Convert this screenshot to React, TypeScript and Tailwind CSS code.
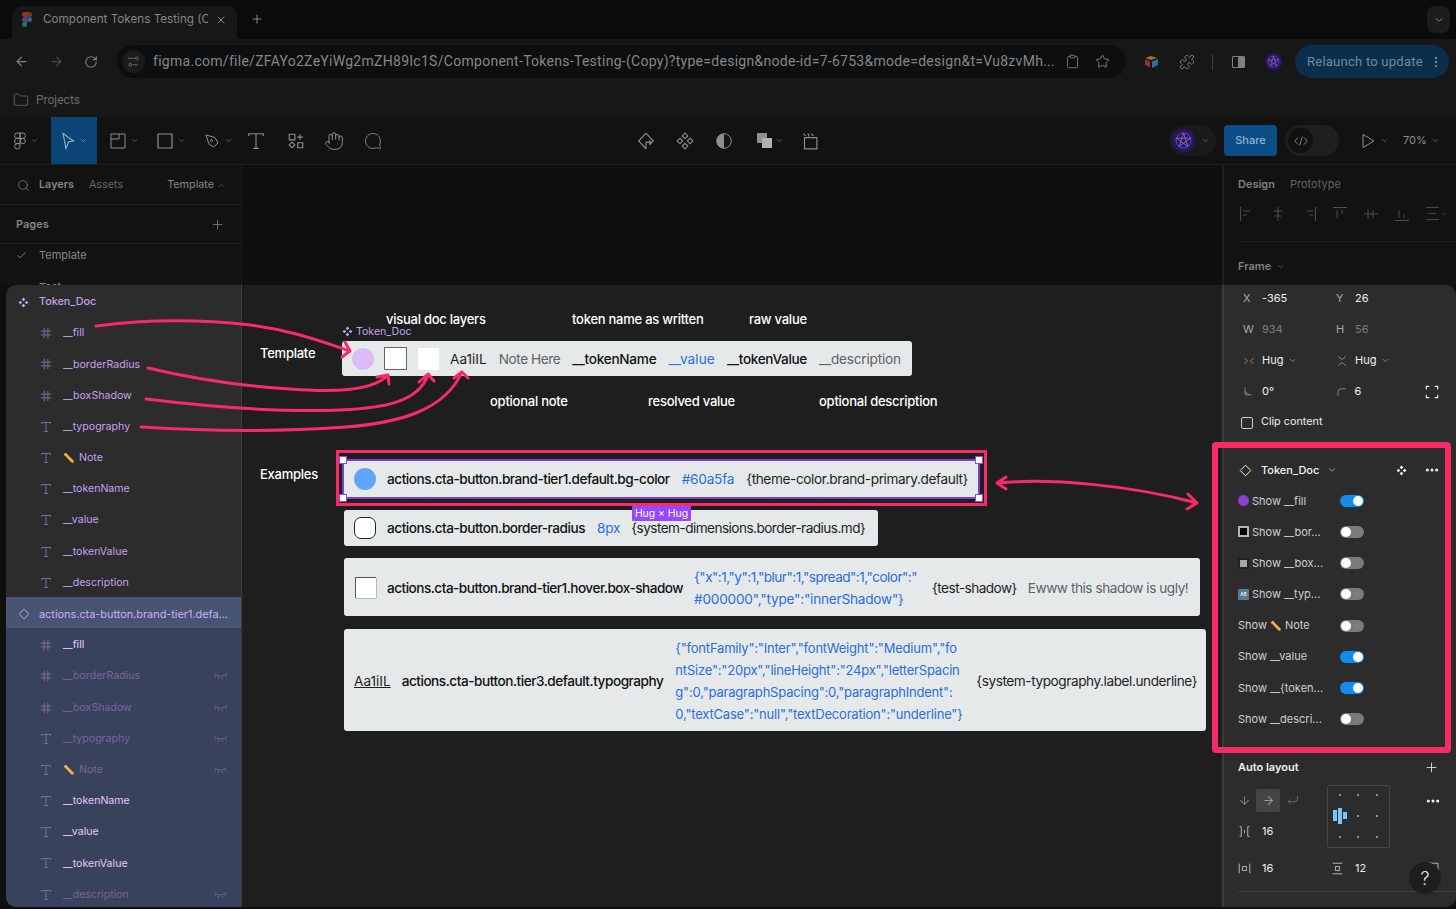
import {
  ArrowLeft,
  ArrowRight,
  Check,
  ChevronDown,
  ChevronUp,
  Clipboard,
  Folder,
  Hand,
  MessageCircle,
  MoreHorizontal,
  MoreVertical,
  Plus,
  Puzzle,
  RotateCw,
  Search,
  Star,
  X,
} from 'lucide-react';

function Svg({ size = 16, children, className }: { size?: number; children: React.ReactNode; className?: string }) {
  return (
    <svg width={size} height={size} viewBox="0 0 16 16" fill="none" stroke="currentColor" strokeWidth={1} className={className}>
      {children}
    </svg>
  );
}

function ComponentIcon({ size = 12, className }: { size?: number; className?: string }) {
  return (
    <svg width={size} height={size} viewBox="0 0 12 12" fill="currentColor" className={className}>
      <path d="M6 .6 8 2.6 6 4.6 4 2.6zM2.6 4 4.6 6 2.6 8 .6 6zM9.4 4 11.4 6 9.4 8 7.4 6zM6 7.4 8 9.4 6 11.4 4 9.4z" />
    </svg>
  );
}

function HashIcon() {
  return (
    <Svg size={12}>
      <path d="M5.5 1v14M10.5 1v14M1 5.5h14M1 10.5h14" strokeWidth={1.3} />
    </Svg>
  );
}

function SerifT() {
  return (
    <Svg size={12}>
      <path d="M2 4V2h12v2M8 2v12M5.5 14h5" strokeWidth={1.3} />
    </Svg>
  );
}

function ClosedEye() {
  return (
    <svg width={15} height={8} viewBox="0 0 15 8" fill="none" stroke="currentColor" strokeWidth={0.9}>
      <path d="M1 1.5c3 3 10 3 13 0M3 3.5 1.5 5.5M6 4.5 5.5 7M9 4.5 9.5 7M12 3.5l1.5 2" />
    </svg>
  );
}

function Pencil() {
  return (
    <svg width={12} height={12} viewBox="0 0 12 12">
      <path d="M2.8.8.8 2.5 8.5 10.5 11 11.2 10.5 8.6z" fill="#f2b23e" />
      <path d="M2.8.8.8 2.5 2 3.8 4 2z" fill="#e9a0a0" />
      <path d="M11 11.2 9.6 10.8 10.7 9.8z" fill="#3c3c3c" />
    </svg>
  );
}

function Avatar({ size }: { size: number }) {
  return (
    <svg width={size} height={size} viewBox="0 0 20 20" className="shrink-0">
      <circle cx="10" cy="10" r="10" fill="#2a1464" />
      <circle cx="10" cy="10" r="6.5" fill="none" stroke="#6f5cb0" strokeWidth={0.7} />
      <path d="M10 3.5 13.8 15.2 3.8 8h12.4L6.2 15.2z" fill="none" stroke="#8f7cc8" strokeWidth={0.7} />
    </svg>
  );
}

type LayerKind = 'hash' | 't';

const templateLayers: { name: string; kind: LayerKind; note?: boolean }[] = [
  { name: '__fill', kind: 'hash' },
  { name: '__borderRadius', kind: 'hash' },
  { name: '__boxShadow', kind: 'hash' },
  { name: '__typography', kind: 't' },
  { name: 'Note', kind: 't', note: true },
  { name: '__tokenName', kind: 't' },
  { name: '__value', kind: 't' },
  { name: '__tokenValue', kind: 't' },
  { name: '__description', kind: 't' },
];

const hiddenLayers = ['__borderRadius', '__boxShadow', '__typography', 'Note', '__description'];

function LayerRow({
  name,
  kind,
  note,
  tone,
}: {
  name: string;
  kind: LayerKind;
  note?: boolean;
  tone: 'base' | 'bright' | 'hidden';
}) {
  const color = tone === 'base' ? 'text-[#c3a2ee]' : tone === 'bright' ? 'text-[#e3c8ff]' : 'text-[#76659a]';
  return (
    <div className={`flex h-[31.2px] shrink-0 items-center pl-[34px] pr-[13px] pt-[3px] ${color}`}>
      <span className="flex w-[23px] shrink-0 text-[#7d6ca0]">{kind === 'hash' ? <HashIcon /> : <SerifT />}</span>
      {note && (
        <span className="mr-[4px]">
          <Pencil />
        </span>
      )}
      <span className="flex-1 text-[10.6px]">{name}</span>
      {tone === 'hidden' && <ClosedEye />}
    </div>
  );
}

function LeftPanel() {
  return (
    <div className="flex h-full w-[236px] shrink-0 flex-col overflow-hidden rounded-l-[10px] border-r border-[#3c3c3c] bg-[#2c2c2c]">
      <div className="flex h-[31.2px] shrink-0 items-center pl-[12px] pt-[3px] text-[#c3a2ee]">
        <span className="flex w-[21px] shrink-0">
          <ComponentIcon size={11} />
        </span>
        <span className="text-[10.8px] font-medium">Token_Doc</span>
      </div>
      {templateLayers.map((l) => (
        <LayerRow key={l.name} name={l.name} kind={l.kind} note={l.note} tone="base" />
      ))}
      <div className="flex h-[31.2px] shrink-0 items-center bg-[#475572] pl-[12px] pt-[3px] text-[#cdaef5]">
        <span className="flex w-[21px] shrink-0 text-[#c3a2ee]">
          <Svg size={12}>
            <path d="M8 1.5 14.5 8 8 14.5 1.5 8z" strokeWidth={1.2} />
          </Svg>
        </span>
        <span className="text-[10.9px]">actions.cta-button.brand-tier1.defa...</span>
      </div>
      <div className="flex flex-1 flex-col bg-[#39425c]">
        {templateLayers.map((l) => (
          <LayerRow
            key={l.name}
            name={l.name}
            kind={l.kind}
            note={l.note}
            tone={hiddenLayers.includes(l.name) ? 'hidden' : 'bright'}
          />
        ))}
      </div>
    </div>
  );
}

function Toggle({ on }: { on?: boolean }) {
  return (
    <span className={`flex h-[12px] w-[24px] items-center rounded-full px-[1px] ${on ? 'justify-end bg-[#0f8cec]' : 'bg-[#7b7b7b]'}`}>
      <span className="h-[10px] w-[10px] rounded-full bg-white" />
    </span>
  );
}

const props: { icon?: React.ReactNode; label: React.ReactNode; on?: boolean }[] = [
  { icon: <span className="h-[11px] w-[11px] rounded-full bg-[#8a3fd1]" />, label: 'Show __fill', on: true },
  {
    icon: <span className="h-[11px] w-[11px] border-2 border-[#b5b5b5] bg-black" />,
    label: 'Show __bor...',
  },
  {
    icon: (
      <span className="flex h-[11px] w-[11px] items-center justify-center bg-[#222]">
        <span className="h-[7px] w-[7px] bg-[#a5a5a5]" />
      </span>
    ),
    label: 'Show __box...',
  },
  {
    icon: (
      <span className="flex h-[11px] w-[11px] items-center justify-center rounded-[1px] bg-[#5b7890] text-[5px] leading-none text-white">
        AB
      </span>
    ),
    label: 'Show __typ...',
  },
  {
    label: (
      <span className="flex items-center gap-[3px]">
        Show <Pencil /> Note
      </span>
    ),
  },
  { label: 'Show __value', on: true },
  { label: 'Show __{token...', on: true },
  { label: 'Show __descri...' },
];

function Field({ icon, value, dim }: { icon: React.ReactNode; value: React.ReactNode; dim?: boolean }) {
  return (
    <div className="flex w-[93px] items-center">
      <span className="flex w-[22px] justify-start pl-[3px] text-[11px] text-[#a8a8a8]">{icon}</span>
      <span className={`flex items-center gap-[5px] text-[11px] ${dim ? 'text-[#7d7d7d]' : 'text-[#f0f0f0]'}`}>{value}</span>
    </div>
  );
}

function RightPanel() {
  return (
    <div className="flex h-full w-[234px] shrink-0 flex-col overflow-hidden rounded-r-[10px] border-l-2 border-[#3a3a3a] bg-[#2c2c2c] pl-[14px]">
      <div className="flex h-[157px] shrink-0 flex-col">
        <div className="-mt-[2px] flex h-[31px] items-center pl-[2px]">
          <Field icon="X" value="-365" />
          <Field icon="Y" value="26" />
        </div>
        <div className="flex h-[31px] items-center pl-[2px]">
          <Field icon="W" value="934" dim />
          <Field icon="H" value="56" dim />
        </div>
        <div className="flex h-[31px] items-center pl-[2px]">
          <Field
            icon={
              <Svg size={12}>
                <path d="M2 4l4 4-4 4M14 4l-4 4 4 4" />
              </Svg>
            }
            value={
              <>
                Hug <ChevronDown size={9} className="text-[#9a9a9a]" />
              </>
            }
          />
          <Field
            icon={
              <Svg size={12}>
                <path d="M3 2l5 4 5-4M3 14l5-4 5 4" />
              </Svg>
            }
            value={
              <>
                Hug <ChevronDown size={9} className="text-[#9a9a9a]" />
              </>
            }
          />
        </div>
        <div className="flex h-[31px] items-center pl-[2px] pr-[17px]">
          <Field
            icon={
              <Svg size={11}>
                <path d="M3 2v11h10M3 8l6 5" />
              </Svg>
            }
            value="0°"
          />
          <Field
            icon={
              <Svg size={11}>
                <path d="M3 14V9a5 5 0 0 1 5-5h6" />
              </Svg>
            }
            value="6"
          />
          <span className="ml-auto flex text-[#e4e4e4]">
            <Svg size={14}>
              <path d="M1.5 5V1.5H5M11 1.5h3.5V5M14.5 11v3.5H11M5 14.5H1.5V11" strokeWidth={1.4} />
            </Svg>
          </span>
        </div>
        <div className="flex h-[31px] items-center gap-[8px] pl-[3px] text-[10.8px] text-[#ececec]">
          <span className="h-[12px] w-[12px] rounded-[2px] border border-[#cfcfcf]" />
          Clip content
        </div>
      </div>

      {/* Token_Doc instance section, sits under the pink highlight */}
      <div className="flex h-[312px] shrink-0 flex-col pr-[16px] pt-[13px]">
        <div className="flex h-[30.2px] items-center text-[#f2f2f2]">
          <span className="flex w-[23px] pl-[1px]">
            <Svg size={13}>
              <path d="M8 1.5 14.5 8 8 14.5 1.5 8z" strokeWidth={1.2} />
            </Svg>
          </span>
          <span className="text-[11px] font-medium">Token_Doc</span>
          <ChevronDown size={10} className="ml-[8px] text-[#b0b0b0]" />
          <span className="ml-auto mr-[17px] flex">
            <ComponentIcon size={11} />
          </span>
          <MoreHorizontal size={16} strokeWidth={2.6} className="text-[#f0f0f0]" />
        </div>
        {props.map((p, i) => (
          <div key={i} className="flex h-[31.2px] shrink-0 items-center text-[11px] text-[#cfcfcf]">
            <span className="flex w-[102px] items-center gap-[3px] whitespace-nowrap">
              {p.icon}
              {p.label}
            </span>
            <Toggle on={p.on} />
          </div>
        ))}
      </div>

      <div className="flex items-center justify-between pr-[17px] pt-[5px]">
        <span className="text-[11px] font-semibold text-[#f2f2f2]">Auto layout</span>
        <Plus size={15} strokeWidth={1.3} className="text-[#f2f2f2]" />
      </div>
      <div className="flex pt-[9px]">
        <div className="w-[89px] shrink-0 pt-[4px]">
          <div className="flex items-center">
            <span className="flex h-[23px] w-[18px] items-center justify-start text-[#777]">
              <ArrowLeft size={13} className="-rotate-90" />
            </span>
            <span className="flex h-[23px] w-[24px] items-center justify-center rounded-[2px] bg-[#444] text-[#999]">
              <ArrowRight size={13} />
            </span>
            <span className="flex h-[23px] w-[24px] items-center justify-center text-[#777]">
              <Svg size={13}>
                <path d="M14 2.5v4a3 3 0 0 1-3 3H3M6 6.5l-3 3 3 3" />
              </Svg>
            </span>
          </div>
          <div className="mt-[8px] flex h-[24px] items-center text-[11px] text-[#f0f0f0]">
            <span className="flex w-[24px] text-[#cfcfcf]">
              <Svg size={13}>
                <path d="M2 2h2v12H2M14 2h-2v12h2M8 6v4" />
              </Svg>
            </span>
            16
          </div>
        </div>
        <div className="grid h-[63px] w-[63px] shrink-0 grid-cols-3 place-items-center rounded-[2px] border border-[#464646] p-[3px]">
          <span className="h-[2px] w-[2px] bg-[#8a8a8a]" />
          <span className="h-[2px] w-[2px] bg-[#8a8a8a]" />
          <span className="h-[2px] w-[2px] bg-[#8a8a8a]" />
          <span className="flex items-center gap-[1px]">
            <span className="h-[11px] w-[4px] bg-[#7cc4f8]" />
            <span className="h-[16px] w-[4px] bg-[#7cc4f8]" />
            <span className="h-[7px] w-[4px] bg-[#7cc4f8]" />
          </span>
          <span className="h-[2px] w-[2px] bg-[#8a8a8a]" />
          <span className="h-[2px] w-[2px] bg-[#8a8a8a]" />
          <span className="h-[2px] w-[2px] bg-[#8a8a8a]" />
          <span className="h-[2px] w-[2px] bg-[#8a8a8a]" />
          <span className="h-[2px] w-[2px] bg-[#8a8a8a]" />
        </div>
        <MoreHorizontal size={16} strokeWidth={2.6} className="ml-auto mr-[15px] mt-[8px] text-[#f0f0f0]" />
      </div>
      <div className="mt-[9px] flex h-[24px] items-center text-[11px] text-[#f0f0f0]">
        <span className="flex w-[24px] text-[#cfcfcf]">
          <Svg size={13}>
            <path d="M1.5 2v12M14.5 2v12M5.5 5.5h5v5h-5z" />
          </Svg>
        </span>
        <span className="w-[69px]">16</span>
        <span className="flex w-[24px] text-[#cfcfcf]">
          <Svg size={13}>
            <path d="M2 1.5h12M2 14.5h12M5.5 5.5h5v5h-5z" />
          </Svg>
        </span>
        12
        <span className="ml-auto mr-[16px] flex text-[#cfcfcf]">
          <Svg size={13}>
            <path d="M1.5 1.5h12M13.5 1.5v12" />
          </Svg>
        </span>
      </div>
      <div className="mr-[-2px] mt-[10px] border-t border-[#3d3d3d]" />
    </div>
  );
}

function TokenCircle({ className }: { className: string }) {
  return <span className={`-mr-[1px] h-[22px] w-[22px] shrink-0 ${className}`} />;
}

const strong = 'whitespace-nowrap text-[13.6px] font-medium tracking-[-0.47px] text-[#111]';
const blue = 'whitespace-nowrap text-[13.6px] tracking-[-0.2px] text-[#2a6ee0]';
const plain = 'whitespace-nowrap text-[13.6px] tracking-[-0.42px] text-[#1e1e1e]';
const muted = 'whitespace-nowrap text-[13.6px] tracking-[-0.45px] text-[#5c6266]';
const label = 'absolute text-[13px] font-medium tracking-[-0.25px] text-white';

function Canvas() {
  return (
    <div className="relative h-full flex-1 bg-[#1e1e1e] pl-[100px] pt-[56px]">
      {/* annotation labels placed freely on the canvas */}
      <span className={`${label} left-[144px] top-[25px]`}>visual doc layers</span>
      <span className={`${label} left-[330px] top-[25px]`}>token name as written</span>
      <span className={`${label} left-[507px] top-[25px]`}>raw value</span>
      <span className={`${label} left-[18px] top-[59px]`}>Template</span>
      <span className={`${label} left-[248px] top-[107px]`}>optional note</span>
      <span className={`${label} left-[406px] top-[107px]`}>resolved value</span>
      <span className={`${label} left-[577px] top-[107px]`}>optional description</span>
      <span className={`${label} left-[18px] top-[180px]`}>Examples</span>
      <span className="absolute left-[100px] top-[40px] flex items-center gap-[3px] text-[10.6px] leading-[13px] text-[#c3a2ee]">
        <ComponentIcon size={11} /> Token_Doc
      </span>

      <div className="flex h-[35px] w-[570px] items-center rounded-[3px] bg-[#e6e9ea] px-[10px]">
        <span className="h-[22px] w-[22px] shrink-0 rounded-full bg-[#dcbcf8]" />
        <span className="ml-[10px] h-[23px] w-[23px] shrink-0 border border-[#666] bg-white" />
        <span className="ml-[11px] h-[22px] w-[21px] shrink-0 bg-white" />
        <div className="ml-[11px] flex translate-y-[1px] items-center gap-[12px] whitespace-nowrap text-[13.6px]">
          <span className="tracking-[0px] text-[#1e1e1e]">Aa1iIL</span>
          <span className="tracking-[-0.4px] text-[#5c6266]">Note Here</span>
          <span className="font-medium tracking-[-0.25px] text-[#111]">__tokenName</span>
          <span className="tracking-[0.1px] text-[#2a6ee0]">__value</span>
          <span className="font-medium tracking-[-0.35px] text-[#111]">__tokenValue</span>
          <span className="tracking-[-0.2px] text-[#5c6266]">__description</span>
        </div>
      </div>

      <div className="relative ml-[2px] mt-[85px] flex h-[36px] w-[634px] items-center gap-[12px] bg-[#e6e9ea] pl-[10px]">
        <TokenCircle className="rounded-full bg-[#60a5fa]" />
        <span className={strong}>actions.cta-button.brand-tier1.default.bg-color</span>
        <span className={blue}>#60a5fa</span>
        <span className="whitespace-nowrap text-[13.6px] tracking-[-0.37px] text-[#1e1e1e]">{'{theme-color.brand-primary.default}'}</span>
        <span className="absolute -inset-[2px] border-2 border-[#7b3fd6]" />
        <span className="absolute -left-[5px] -top-[5px] h-[8px] w-[8px] border border-[#8b4be8] bg-white" />
        <span className="absolute -right-[5px] -top-[5px] h-[8px] w-[8px] border border-[#8b4be8] bg-white" />
        <span className="absolute -bottom-[5px] -left-[5px] h-[8px] w-[8px] border border-[#8b4be8] bg-white" />
        <span className="absolute -bottom-[5px] -right-[5px] h-[8px] w-[8px] border border-[#8b4be8] bg-white" />
        <span className="absolute -bottom-[9px] -left-[8px] -right-[9px] -top-[11px] border-[3px] border-[#f92a68]" />
        <span className="absolute left-[288px] top-[45px] z-10 flex h-[15px] w-[59px] items-center justify-center rounded-[1px] bg-[#9747ff] text-[10.4px] text-white">
          Hug × Hug
        </span>
      </div>

      <div className="ml-[2px] mt-[13px] flex h-[36px] w-[534px] items-center gap-[12px] rounded-[3px] bg-[#e6e9ea] pl-[10px]">
        <TokenCircle className="rounded-[7px] border border-[#222] bg-white" />
        <span className={strong}>actions.cta-button.border-radius</span>
        <span className="-mr-[1px] whitespace-nowrap text-[13.6px] tracking-[-0.2px] text-[#2a6ee0]">8px</span>
        <span className="whitespace-nowrap text-[13.6px] tracking-[-0.54px] text-[#1e1e1e]">{'{system-dimensions.border-radius.md}'}</span>
      </div>

      <div className="ml-[2px] mt-[12px] flex h-[58px] w-[856px] items-center gap-[11px] rounded-[3px] bg-[#e6e9ea] pl-[11px]">
        <span className="h-[21px] w-[21px] shrink-0 border-l border-t border-[#555] bg-white shadow-[1px_1px_0_#bbb]" />
        <span className="translate-y-[1px] whitespace-nowrap text-[13.6px] font-medium tracking-[-0.51px] text-[#111]">
          actions.cta-button.brand-tier1.hover.box-shadow
        </span>
        <div className="w-[227px] translate-y-[2px] whitespace-nowrap text-[13.6px] leading-[21.6px] text-[#2a6ee0]">
          <div className="tracking-[-0.52px]">{'{"x":1,"y":1,"blur":1,"spread":1,"color":"'}</div>
          <div className="tracking-[-0.2px]">{'#000000","type":"innerShadow"}'}</div>
        </div>
        <span className="translate-y-[1px] whitespace-nowrap text-[13.6px] tracking-[-0.53px] text-[#1e1e1e]">{'{test-shadow}'}</span>
        <span className={`${muted} translate-y-[1px]`}>Ewww this shadow is ugly!</span>
      </div>

      <div className="ml-[2px] mt-[13px] flex h-[102px] w-[862px] items-center gap-[12px] rounded-[3px] bg-[#e6e9ea] pl-[10px]">
        <span className="-mr-[1px] translate-y-[1px] whitespace-nowrap text-[13.6px] text-[#1e1e1e] underline">Aa1iIL</span>
        <span className={`${strong} translate-y-[1px]`}>actions.cta-button.tier3.default.typography</span>
        <div className={`${blue} w-[289px] translate-y-[2px] text-[13px] leading-[21.8px]`}>
          <div>{'{"fontFamily":"Inter","fontWeight":"Medium","fo'}</div>
          <div>{'ntSize":"20px","lineHeight":"24px","letterSpacin'}</div>
          <div>{'g":0,"paragraphSpacing":0,"paragraphIndent":'}</div>
          <div>{'0,"textCase":"null","textDecoration":"underline"}'}</div>
        </div>
        <span className={`${plain} translate-y-[1px]`}>{'{system-typography.label.underline}'}</span>
      </div>
    </div>
  );
}

function ToolCaret() {
  return <ChevronDown size={9} strokeWidth={1.6} className="shrink-0 text-[#7a7a7a]" />;
}

function Toolbar() {
  return (
    <div className="flex h-[48px] items-center border-b border-[#1c1c1c] bg-[#121212] text-[#8e8e8e]">
      <div className="flex w-[51px] items-center justify-center gap-[4px] pl-[1px]">
        <svg width={12} height={20} viewBox="0 0 12 18" fill="none" stroke="currentColor" strokeWidth={1}>
          <path d="M6 1H3.2a2.6 2.6 0 0 0 0 5.3H6zM6 1h2.8a2.6 2.6 0 0 1 0 5.3H6zM6 6.3H3.2a2.6 2.6 0 0 0 0 5.3H6zM6 11.6H3.2A2.7 2.7 0 1 0 6 14.2z" />
          <circle cx="8.8" cy="9" r="2.6" />
        </svg>
        <ToolCaret />
      </div>
      <div className="flex h-full w-[46px] items-center justify-center gap-[4px] bg-[#0a4576] text-[#8fb3d0]">
        <svg width={14} height={18} viewBox="0 0 14 18" fill="none" stroke="currentColor" strokeWidth={1.1}>
          <path d="M2 1.5 12.5 9 7.5 10 5 16.5z" />
        </svg>
        <ChevronDown size={9} strokeWidth={1.6} />
      </div>
      <div className="flex w-[46px] items-center gap-[4px] pl-[13px]">
        <Svg size={16}>
          <path d="M1 1h14v14H1zM1 6h8V1" />
        </Svg>
        <ToolCaret />
      </div>
      <div className="flex w-[46px] items-center gap-[4px] pl-[14px]">
        <Svg size={16}>
          <path d="M1 1h14v14H1z" strokeWidth={1.2} />
        </Svg>
        <ToolCaret />
      </div>
      <div className="flex w-[46px] items-center gap-[4px] pl-[15px]">
        <Svg size={16}>
          <path d="M2 2 11 4.5 14 10 9.5 14 5 11z" />
          <circle cx="7.5" cy="7.5" r="1" />
        </Svg>
        <ToolCaret />
      </div>
      <div className="flex w-[42px] justify-center">
        <Svg size={18}>
          <path d="M1.5 3.5V1.5h13v2M8 1.5v13M5.5 14.5h5" />
        </Svg>
      </div>
      <div className="flex w-[38px] justify-center">
        <Svg size={18}>
          <path d="M2 2h5v5H2zM9 4.5h5M11.5 2v5M4.5 9 7 11.5 4.5 14 2 11.5zM9.5 9.5H14V14H9.5z" />
        </Svg>
      </div>
      <div className="flex w-[38px] justify-center">
        <Hand size={20} strokeWidth={1.2} />
      </div>
      <div className="flex w-[40px] justify-center">
        <MessageCircle size={18} strokeWidth={1.2} className="-scale-x-100" />
      </div>

      <div className="ml-[233px] flex w-[40px] justify-center">
        <Svg size={18}>
          <path d="M8 1 1.5 8 8 15M8 1l6.5 7L11 11.5M8 15V9h4l-1-1.5M12 9l-1 1.5" />
        </Svg>
      </div>
      <div className="flex w-[38px] justify-center">
        <Svg size={18}>
          <path d="M8 1 10.5 3.5 8 6 5.5 3.5zM3.5 5.5 6 8 3.5 10.5 1 8zM12.5 5.5 15 8l-2.5 2.5L10 8zM8 10l2.5 2.5L8 15l-2.5-2.5z" />
        </Svg>
      </div>
      <div className="flex w-[39px] justify-center">
        <svg width={16} height={16} viewBox="0 0 16 16">
          <circle cx="8" cy="8" r="7.3" fill="none" stroke="currentColor" />
          <path d="M8 .7a7.3 7.3 0 0 0 0 14.6z" fill="currentColor" />
        </svg>
      </div>
      <div className="flex w-[44px] items-center gap-[2px] pl-[13px]">
        <svg width={17} height={17} viewBox="0 0 17 17" fill="#8f8f8f" className="shrink-0">
          <path d="M1 1h10v10H1z" />
          <path d="M6 6h10v10H6z" fill="#b0b0b0" />
        </svg>
        <ToolCaret />
      </div>
      <div className="flex w-[44px] justify-center">
        <Svg size={18}>
          <path d="M4 5h11v10H4zM5 3.5 3 1.5M7 1l1 3M10 1.5 12 3.5" />
        </Svg>
      </div>

      <div className="ml-[338px] flex h-[31px] w-[47px] items-center gap-[6px] rounded-full bg-[#1a1a1a] pl-[3px]">
        <Avatar size={23} />
        <ToolCaret />
      </div>
      <button className="ml-[8px] h-[31px] w-[53px] rounded-[4px] bg-[#0b4d84] text-[11px] font-medium text-[#8fb3d0]">Share</button>
      <div className="ml-[8px] flex h-[31px] w-[54px] items-center rounded-full bg-[#1f1f1f] pl-[3px]">
        <span className="flex h-[25px] w-[25px] items-center justify-center rounded-full bg-[#111]">
          <Svg size={14}>
            <path d="M4.5 4 1 8l3.5 4M11.5 4 15 8l-3.5 4M9.5 3 6.5 13" />
          </Svg>
        </span>
      </div>
      <div className="ml-[21px] flex items-center gap-[4px]">
        <Svg size={16}>
          <path d="M3 1.5 14 8 3 14.5z" />
        </Svg>
        <ToolCaret />
      </div>
      <span className="ml-[14px] text-[11px]">70%</span>
      <span className="ml-[4px]">
        <ToolCaret />
      </span>
    </div>
  );
}

function DimRow() {
  return (
    <div className="flex h-[120px] overflow-hidden bg-[#0f0f0f]">
      <div className="w-[242px] shrink-0 border-r border-[#1d1d1d] bg-[#121212] text-[#858585]">
        <div className="flex h-[40px] items-center border-b border-[#1d1d1d] pl-[17px] pt-[1px] text-[10.8px]">
          <Search size={13} strokeWidth={1.3} />
          <span className="ml-[9px] font-semibold">Layers</span>
          <span className="ml-[15px] text-[#666]">Assets</span>
          <span className="ml-[44px]">Template</span>
          <ChevronUp size={9} className="ml-[3px] text-[#555]" />
        </div>
        <div className="flex h-[39px] items-center justify-between border-b border-[#1d1d1d] pl-[16px] pr-[16px] text-[11px] font-semibold">
          Pages
          <Plus size={15} strokeWidth={1.2} />
        </div>
        <div className="flex h-[23px] items-center pl-[16px] text-[11px]">
          <Check size={11} strokeWidth={2} />
          <span className="ml-[12px]">Template</span>
        </div>
        <div className="pl-[39px] pt-[13px] text-[11px] leading-[14px]">Test</div>
      </div>
      <div className="flex-1" />
      <div className="w-[234px] shrink-0 border-l-2 border-[#1f1f1f] bg-[#121212] pl-[14px] text-[#808080]">
        <div className="flex h-[38px] items-center gap-[15px] text-[11px]">
          <span className="font-semibold">Design</span>
          <span className="text-[#626262]">Prototype</span>
        </div>
        <div className="flex h-[39px] items-start gap-[15px] border-b border-[#1d1d1d] pl-[1px] pt-[3px] text-[#4d4d4d]">
          <Svg size={16}>
            <path d="M1.5 1v14M4 5h7M4 9h4" />
          </Svg>
          <Svg size={16}>
            <path d="M8 1v14M3.5 5h9M4.5 10h7" />
          </Svg>
          <Svg size={16}>
            <path d="M14.5 1v14M5 5h7M8 9h4" />
          </Svg>
          <Svg size={16}>
            <path d="M1 1.5h14M5 4v8M10 4v4" />
          </Svg>
          <Svg size={16}>
            <path d="M1 8h14M5 3v10M10 4v8" />
          </Svg>
          <Svg size={16}>
            <path d="M1 14.5h14M5 4v8M10 8v4" />
          </Svg>
          <span className="flex items-center">
            <Svg size={15}>
              <path d="M1 1.5h14M1 14.5h14M4 8h8" />
            </Svg>
            <ChevronDown size={8} />
          </span>
        </div>
        <div className="flex h-[49px] items-center gap-[5px] text-[11px] font-semibold">
          Frame <ChevronDown size={9} className="text-[#555]" />
        </div>
      </div>
    </div>
  );
}

function Arrows() {
  return (
    <svg
      className="pointer-events-none absolute left-0 top-0 z-20"
      width={1456}
      height={909}
      viewBox="0 0 1456 909"
      fill="none"
      stroke="#f92a68"
      strokeWidth={3}
      strokeLinecap="round"
      strokeLinejoin="round"
    >
      <path d="M96 326C150 319 205 320 250 325C290 330 320 341 350 351M345 342l5 9-8 6" />
      <path d="M148 368C190 378 240 386 290 389C330 392 372 392 388 375M377 377l11-2 1 9" />
      <path d="M146 399C220 408 290 412 340 410C385 408 418 402 428 375M419 382l9-8 6 7" />
      <path d="M141 427C220 432 290 431 345 427C400 423 445 410 462 372M454 378l8-6 6 6" />
      <path d="M997 483C1050 478 1130 485 1197 503M1006 477l-9 6 9 6M1188 494l9 9-10 6" />
    </svg>
  );
}

export default function App() {
  return (
    <div className="relative h-[909px] w-[1456px] overflow-hidden bg-[#0f0f0f] font-[Inter,sans-serif]">
      {/* browser tabs */}
      <div className="flex h-[39px] items-end bg-[#0a0b0c] pl-[12px] pr-[6px]">
        <div className="flex h-[33px] w-[225px] items-center rounded-t-[10px] bg-[#171717] pb-[6px] pl-[9px] pr-[10px]">
          <svg width={10} height={16} viewBox="0 0 10 16" className="ml-[1px] shrink-0">
            <path d="M5 0H2.5a2.5 2.5 0 0 0 0 5H5z" fill="#8a3a26" />
            <path d="M5 0h2.5a2.5 2.5 0 0 1 0 5H5z" fill="#7a3322" />
            <path d="M5 5H2.5a2.5 2.5 0 0 0 0 5H5z" fill="#5a3a8a" />
            <circle cx="7.5" cy="7.5" r="2.5" fill="#2a6a90" />
            <path d="M5 10H2.5A2.5 2.5 0 1 0 5 12.5z" fill="#1f7a4c" />
          </svg>
          <span className="ml-[11px] w-[165px] overflow-hidden whitespace-nowrap text-[11.7px] text-[#858585]">Component Tokens Testing (Copy)</span>
          <X size={12} strokeWidth={2} className="ml-auto text-[#858585]" />
        </div>
        <Plus size={14} strokeWidth={1.8} className="mb-[13px] ml-[13px] text-[#858585]" />
        <span className="mb-[6px] ml-auto flex h-[27px] w-[23px] items-center justify-center rounded-[8px] bg-[#1c1c1c] text-[#858585]">
          <ChevronDown size={12} strokeWidth={2} />
        </span>
      </div>

      {/* address bar */}
      <div className="flex h-[41px] items-center bg-[#171717] pt-[4px] text-[#7d7d7d]">
        <ArrowLeft size={15} className="ml-[14px]" />
        <ArrowRight size={15} className="ml-[20px] text-[#4a4a4a]" />
        <RotateCw size={14} className="ml-[20px]" />
        <div className="ml-[19px] flex h-[33px] w-[1009px] items-center rounded-full bg-[#0d0e0f] pl-[5px] pr-[16px]">
          <span className="flex h-[23px] w-[23px] items-center justify-center rounded-full bg-[#1b1b1b]">
            <Svg size={13}>
              <path d="M1 4h8M13 12H7" />
              <circle cx="12" cy="4" r="1.7" />
              <circle cx="4" cy="12" r="1.7" />
            </Svg>
          </span>
          <span className="ml-[8px] w-[905px] overflow-hidden whitespace-nowrap font-[Roboto,sans-serif] text-[14px] tracking-[0.28px] text-[#868686]">
            figma.com/file/ZFAYo2ZeYiWg2mZH89Ic1S/Component-Tokens-Testing-(Copy)?type=design&amp;node-id=7-6753&amp;mode=design&amp;t=Vu8zvMh...
          </span>
          <Clipboard size={15} strokeWidth={1.4} className="ml-auto" />
          <Star size={15} strokeWidth={1.6} className="ml-[15px]" />
        </div>
        <svg width={15} height={14} viewBox="0 0 15 14" className="ml-[18px]">
          <path d="M7 1 13 3 7 5 1 3z" fill="#9a7420" />
          <path d="M1 4.5 6 6.5v6L1 10z" fill="#8f2d3f" />
          <path d="M8 6.5 14 4v6l-6 3z" fill="#2c6f92" />
        </svg>
        <Puzzle size={16} strokeWidth={1.4} className="ml-[20px]" />
        <span className="ml-[17px] h-[16px] w-px bg-[#3a3a3a]" />
        <span className="ml-[19px] flex h-[12px] w-[13px] justify-end rounded-[1px] border border-[#808080]">
          <span className="h-full w-[6px] bg-[#808080]" />
        </span>
        <span className="ml-[20px] flex">
          <Avatar size={17} />
        </span>
        <div className="ml-[13px] flex h-[33px] w-[154px] items-center rounded-full bg-[#0b2e4b] pl-[12px] text-[#6f8b9f]">
          <span className="font-[Roboto,sans-serif] text-[13.1px] tracking-[0.2px]">Relaunch to update</span>
          <MoreVertical size={14} className="ml-auto mr-[6px]" />
        </div>
      </div>

      {/* bookmarks */}
      <div className="flex h-[37px] items-center gap-[7px] bg-[#171717] pl-[13px] pt-[3px] text-[#6a6a6a]">
        <Folder size={16} strokeWidth={1.2} />
        <span className="font-[Roboto,sans-serif] text-[12px]">Projects</span>
      </div>

      <Toolbar />
      <DimRow />

      {/* lit area: everything the annotation is about */}
      <div className="relative flex h-[622px] pl-[6px]">
        <LeftPanel />
        <Canvas />
        <RightPanel />
        <span className="absolute left-[1212px] top-[157px] h-[311px] w-[239px] rounded-[4px] border-[6px] border-[#f92a68]" />
        <span className="absolute left-[1409px] top-[577px] z-10 flex h-[32px] w-[32px] items-center justify-center rounded-full bg-[#1e1e1e] text-[18px] font-light text-[#e4e4e4]">
          ?
        </span>
      </div>

      <Arrows />
    </div>
  );
}
